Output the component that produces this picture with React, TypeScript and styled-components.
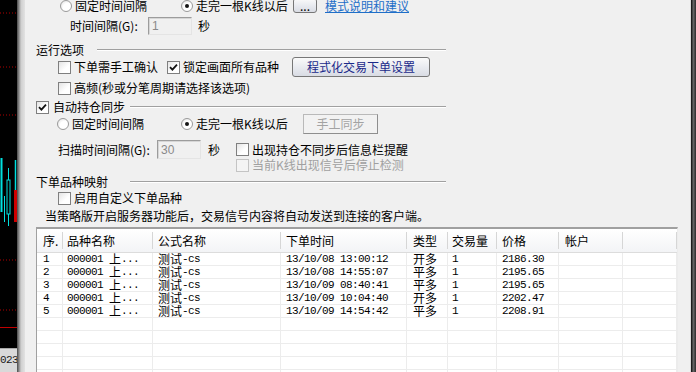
import React from 'react';
import styled, { createGlobalStyle, css } from 'styled-components';

const Global = createGlobalStyle`
  html, body { margin: 0; padding: 0; background: #f0f0f0; }
  body {
    width: 696px; height: 372px; overflow: hidden;
    font-family: "Noto Sans CJK SC", "Liberation Sans", sans-serif;
    font-size: 12px; color: #000;
  }
`;

const Screen = styled.div`
  display: flex;
  width: 696px;
  height: 372px;
  overflow: hidden;
`;

const ChartStrip = styled.div`
  width: 17px;
  flex: none;
  background: #000;
  display: flex;
  flex-direction: column;
`;

const ChartSvg = styled.svg`
  flex: 1;
  display: block;
  width: 17px;
`;

const AxisLabel = styled.div`
  height: 23px;
  flex: none;
  background: #d9d9d9;
  border-top: 1px solid #a8a8a8;
  font-family: "Liberation Mono", monospace;
  font-size: 11px;
  letter-spacing: -0.6px;
  line-height: 22px;
  color: #1a1a1a;
  overflow: hidden;
  white-space: nowrap;
`;

const FrameLeft = styled.div`
  width: 8px;
  flex: none;
  background: linear-gradient(to right, #4a4a4a 0, #8c8c8c 2px, #cfcfcf 4px, #e2e2e2 8px);
`;

const FrameRight = styled.div`
  width: 6px;
  flex: none;
  background: linear-gradient(to right, #d8d8d8 0, #d8d8d8 1px, #1c1c1c 1px, #1c1c1c 2px, #6e6e6e 3px, #2a2a2a 6px);
`;

const Panel = styled.div`
  flex: 1;
  background: #f0f0f0;
  display: flex;
  flex-direction: column;
  min-width: 0;
`;

const Row = styled.div<{ $top: number; $h: number; $indent: number }>`
  display: flex;
  align-items: center;
  flex: none;
  height: ${(p) => p.$h}px;
  margin-top: ${(p) => p.$top}px;
  padding-left: ${(p) => p.$indent}px;
  white-space: nowrap;
`;

const Item = styled.label<{ $w?: number; $gap?: number; $ml?: number; $disabled?: boolean }>`
  display: flex;
  align-items: center;
  flex: none;
  gap: ${(p) => p.$gap ?? 3}px;
  ${(p) => (p.$w ? `width: ${p.$w}px;` : '')}
  margin-left: ${(p) => p.$ml ?? 0}px;
  color: ${(p) => (p.$disabled ? '#a0a0a0' : '#000')};
  line-height: 14px;
`;

const RadioCircle = styled.span<{ $on?: boolean }>`
  position: relative;
  width: 12px;
  height: 12px;
  flex: none;
  box-sizing: border-box;
  border-radius: 50%;
  border: 1px solid #9a9a9a;
  background: radial-gradient(circle at 65% 65%, #ffffff 45%, #dcdcdc 100%);
  ${(p) =>
    p.$on &&
    css`
      &::after {
        content: '';
        position: absolute;
        left: 3px;
        top: 3px;
        width: 4px;
        height: 4px;
        border-radius: 50%;
        background: #151515;
      }
    `}
`;

const CheckBox = styled.span<{ $disabled?: boolean }>`
  width: 13px;
  height: 13px;
  flex: none;
  box-sizing: border-box;
  border: 1px solid ${(p) => (p.$disabled ? '#c4c4c4' : '#7f7f7f')};
  background: ${(p) => (p.$disabled ? '#f4f4f4' : 'linear-gradient(135deg, #e4e4e4, #ffffff 60%)')};
  display: flex;
  align-items: center;
  justify-content: center;
`;

const Text = styled.span<{ $w?: number; $ml?: number }>`
  flex: none;
  ${(p) => (p.$w ? `width: ${p.$w}px;` : '')}
  margin-left: ${(p) => p.$ml ?? 0}px;
  line-height: 14px;
`;

const PushButton = styled.button<{ $w: number; $h: number; $ml?: number; $navy?: boolean }>`
  width: ${(p) => p.$w}px;
  height: ${(p) => p.$h}px;
  margin-left: ${(p) => p.$ml ?? 0}px;
  flex: none;
  box-sizing: border-box;
  padding: 0;
  border: 1px solid #777;
  border-radius: 3px;
  background: linear-gradient(#fafafa, #e9ebf0 50%, #d9dce4);
  font-family: "Noto Sans CJK SC", sans-serif;
  font-size: 12px;
  line-height: 12px;
  color: ${(p) => (p.$navy ? '#1b2a8a' : '#000')};
  &:disabled {
    color: #a3a3a3;
    border-color: #b9b9b9 #8e8e8e #8e8e8e #b9b9b9;
    border-radius: 0;
    background: #f2f2f2;
  }
`;

const TextBox = styled.input<{ $w: number; $h: number }>`
  width: ${(p) => p.$w}px;
  height: ${(p) => p.$h}px;
  flex: none;
  box-sizing: border-box;
  padding: 0 0 0 3px;
  border: 1px solid;
  border-color: #9c9c9c #e4e4e4 #e4e4e4 #9c9c9c;
  box-shadow: inset 1px 1px 0 #d6d6d6;
  background: #f0f0f0;
  color: #8a8a8a;
  font-family: "Liberation Sans", sans-serif;
  font-size: 12px;
  outline: none;
`;

const HelpLink = styled.a`
  margin-left: 8px;
  color: #1f6fc8;
  text-decoration: underline;
  line-height: 14px;
  cursor: pointer;
`;

const GroupHeader = styled.div<{ $top: number; $lineStart: number }>`
  display: grid;
  grid-template-columns: ${(p) => p.$lineStart}px 1fr;
  align-items: center;
  flex: none;
  width: 410px;
  height: 14px;
  margin-top: ${(p) => p.$top}px;
  margin-left: 11px;
  white-space: nowrap;
`;

const EtchedLine = styled.div`
  height: 0;
  border-top: 1px solid #a0a0a0;
  border-bottom: 1px solid #ffffff;
`;

const COLS = '26px 90px 128px 126px 41px 49px 62px 64px 1fr';

const Table = styled.div`
  flex: 1;
  min-height: 0;
  width: 642px;
  margin: 4px 0 0 11px;
  box-sizing: border-box;
  border-top: 2px solid #a0a0a0;
  border-left: 1px solid #a0a0a0;
  border-right: 1px solid #ececec;
  background: #fff;
  overflow: hidden;
`;

const HeaderRow = styled.div`
  display: grid;
  grid-template-columns: ${COLS};
  height: 24px;
  box-sizing: border-box;
  padding: 3px 0 3px;
  background: linear-gradient(#ffffff, #f3f4f6);
  border-bottom: 1px solid #dcdcdc;
`;

const HeaderCell = styled.div<{ $pad: number }>`
  display: flex;
  align-items: center;
  padding-left: ${(p) => p.$pad}px;
  border-right: 1px solid #d6d6d6;
  line-height: 14px;
  white-space: nowrap;
  overflow: hidden;
`;

const BodyRow = styled.div`
  display: grid;
  grid-template-columns: ${COLS};
  height: 13px;
  box-sizing: border-box;
  border-bottom: 1px solid #ececec;
`;

const Cell = styled.div<{ $pad: number }>`
  display: flex;
  align-items: center;
  padding-left: ${(p) => p.$pad}px;
  border-right: 1px solid #ececec;
  line-height: 12px;
  white-space: nowrap;
  overflow: hidden;
`;

const Mono = styled.span`
  font-family: "Liberation Mono", monospace;
  font-size: 11px;
  letter-spacing: -0.6px;
  white-space: pre;
`;

const Check = () => (
  <svg width="9" height="9" viewBox="0 0 9 9">
    <path d="M1 4.2 L3.4 6.6 L8 1.6" fill="none" stroke="#111" strokeWidth="1.8" />
  </svg>
);

const PADS = [6, 4, 5, 5, 6, 4, 5, 6, 6];
const HEADERS = ['序.', '品种名称', '公式名称', '下单时间', '类型', '交易量', '价格', '帐户', ''];

const ROWS = [
  ['1', '13/10/08 13:00:12', '开多', '1', '2186.30'],
  ['2', '13/10/08 14:55:07', '平多', '1', '2195.65'],
  ['3', '13/10/09 08:40:41', '平多', '1', '2195.65'],
  ['4', '13/10/09 10:04:40', '开多', '1', '2202.47'],
  ['5', '13/10/09 14:54:42', '平多', '1', '2208.91'],
];

const ChartDrawing = () => (
  <ChartSvg viewBox="0 0 17 348" preserveAspectRatio="none">
    {[13, 67, 115, 260, 310].map((y) => (
      <line key={y} x1="0" x2="17" y1={y} y2={y} stroke="#b00000" strokeWidth="1" strokeDasharray="1 2" />
    ))}
    <line x1="0" x2="17" y1="327.5" y2="327.5" stroke="#c00000" strokeWidth="1" />
    <line x1="1.5" x2="1.5" y1="158" y2="212" stroke="#00e0e0" strokeWidth="2" />
    <line x1="8.5" x2="8.5" y1="168" y2="226" stroke="#00e0e0" strokeWidth="1" />
    <rect x="7" y="180" width="3" height="34" fill="#000" stroke="#00e0e0" strokeWidth="1" />
    <line x1="15.5" x2="15.5" y1="160" y2="190" stroke="#00e0e0" strokeWidth="1.5" />
    <rect x="14" y="190" width="3" height="32" fill="#d00000" />
    <line x1="4.5" x2="4.5" y1="196" y2="222" stroke="#00e0e0" strokeWidth="1" />
  </ChartSvg>
);

export default function App() {
  return (
    <>
      <Global />
      <Screen>
        <ChartStrip>
          <ChartDrawing />
          <AxisLabel>023</AxisLabel>
        </ChartStrip>
        <FrameLeft />
        <Panel>
          <Row $top={-2} $h={15} $indent={35}>
            <Item $w={121}>
              <RadioCircle />
              <span>固定时间间隔</span>
            </Item>
            <Item $w={112}>
              <RadioCircle $on />
              <span>走完一根K线以后</span>
            </Item>
            <PushButton $w={24} $h={15}>...</PushButton>
            <HelpLink>模式说明和建议</HelpLink>
          </Row>

          <Row $top={4} $h={18} $indent={45}>
            <Text $w={78}>时间间隔(G):</Text>
            <TextBox $w={44} $h={18} value="1" readOnly />
            <Text $ml={6}>秒</Text>
          </Row>

          <GroupHeader $top={6} $lineStart={61}>
            <span>运行选项</span>
            <EtchedLine />
          </GroupHeader>

          <Row $top={2} $h={20} $indent={33}>
            <Item $w={109}>
              <CheckBox />
              <span>下单需手工确认</span>
            </Item>
            <Item $w={125}>
              <CheckBox>
                <Check />
              </CheckBox>
              <span>锁定画面所有品种</span>
            </Item>
            <PushButton $w={138} $h={20} $navy>
              程式化交易下单设置
            </PushButton>
          </Row>

          <Row $top={4} $h={14} $indent={33}>
            <Item>
              <CheckBox />
              <span>高频(秒或分笔周期请选择该选项)</span>
            </Item>
          </Row>

          <GroupHeader $top={5} $lineStart={94}>
            <Item $gap={4}>
              <CheckBox>
                <Check />
              </CheckBox>
              <span>自动持仓同步</span>
            </Item>
            <EtchedLine />
          </GroupHeader>

          <Row $top={0} $h={20} $indent={32}>
            <Item $w={124}>
              <RadioCircle />
              <span>固定时间间隔</span>
            </Item>
            <Item $w={122}>
              <RadioCircle $on />
              <span>走完一根K线以后</span>
            </Item>
            <PushButton $w={75} $h={20} disabled>
              手工同步
            </PushButton>
          </Row>

          <Row $top={6} $h={19} $indent={33}>
            <Text $w={99}>扫描时间间隔(G):</Text>
            <TextBox $w={44} $h={19} value="30" readOnly />
            <Text $ml={7}>秒</Text>
            <Item $ml={16}>
              <CheckBox />
              <span>出现持仓不同步后信息栏提醒</span>
            </Item>
          </Row>

          <Row $top={0} $h={12} $indent={211}>
            <Item $disabled>
              <CheckBox $disabled />
              <span>当前K线出现信号后停止检测</span>
            </Item>
          </Row>

          <GroupHeader $top={2} $lineStart={94}>
            <span>下单品种映射</span>
            <EtchedLine />
          </GroupHeader>

          <Row $top={4} $h={14} $indent={33}>
            <Item>
              <CheckBox />
              <span>启用自定义下单品种</span>
            </Item>
          </Row>

          <Row $top={4} $h={14} $indent={20}>
            <Text>当策略版开启服务器功能后，交易信号内容将自动发送到连接的客户端。</Text>
          </Row>

          <Table>
            <HeaderRow>
              {HEADERS.map((h, i) => (
                <HeaderCell key={i} $pad={PADS[i]}>
                  {h}
                </HeaderCell>
              ))}
            </HeaderRow>
            {ROWS.map((r) => (
              <BodyRow key={r[0]}>
                <Cell $pad={PADS[0]}>
                  <Mono>{r[0]}</Mono>
                </Cell>
                <Cell $pad={PADS[1]}>
                  <Mono>000001 </Mono>
                  <span>上</span>
                  <Mono>...</Mono>
                </Cell>
                <Cell $pad={PADS[2]}>
                  <span>测试</span>
                  <Mono>-cs</Mono>
                </Cell>
                <Cell $pad={PADS[3]}>
                  <Mono>{r[1]}</Mono>
                </Cell>
                <Cell $pad={PADS[4]}>{r[2]}</Cell>
                <Cell $pad={PADS[5]}>
                  <Mono>{r[3]}</Mono>
                </Cell>
                <Cell $pad={PADS[6]}>
                  <Mono>{r[4]}</Mono>
                </Cell>
                <Cell $pad={PADS[7]} />
                <Cell $pad={PADS[8]} />
              </BodyRow>
            ))}
            {[0, 1, 2, 3, 4].map((k) => (
              <BodyRow key={`e${k}`}>
                {PADS.map((p, i) => (
                  <Cell key={i} $pad={p} />
                ))}
              </BodyRow>
            ))}
          </Table>
        </Panel>
        <FrameRight />
      </Screen>
    </>
  );
}
